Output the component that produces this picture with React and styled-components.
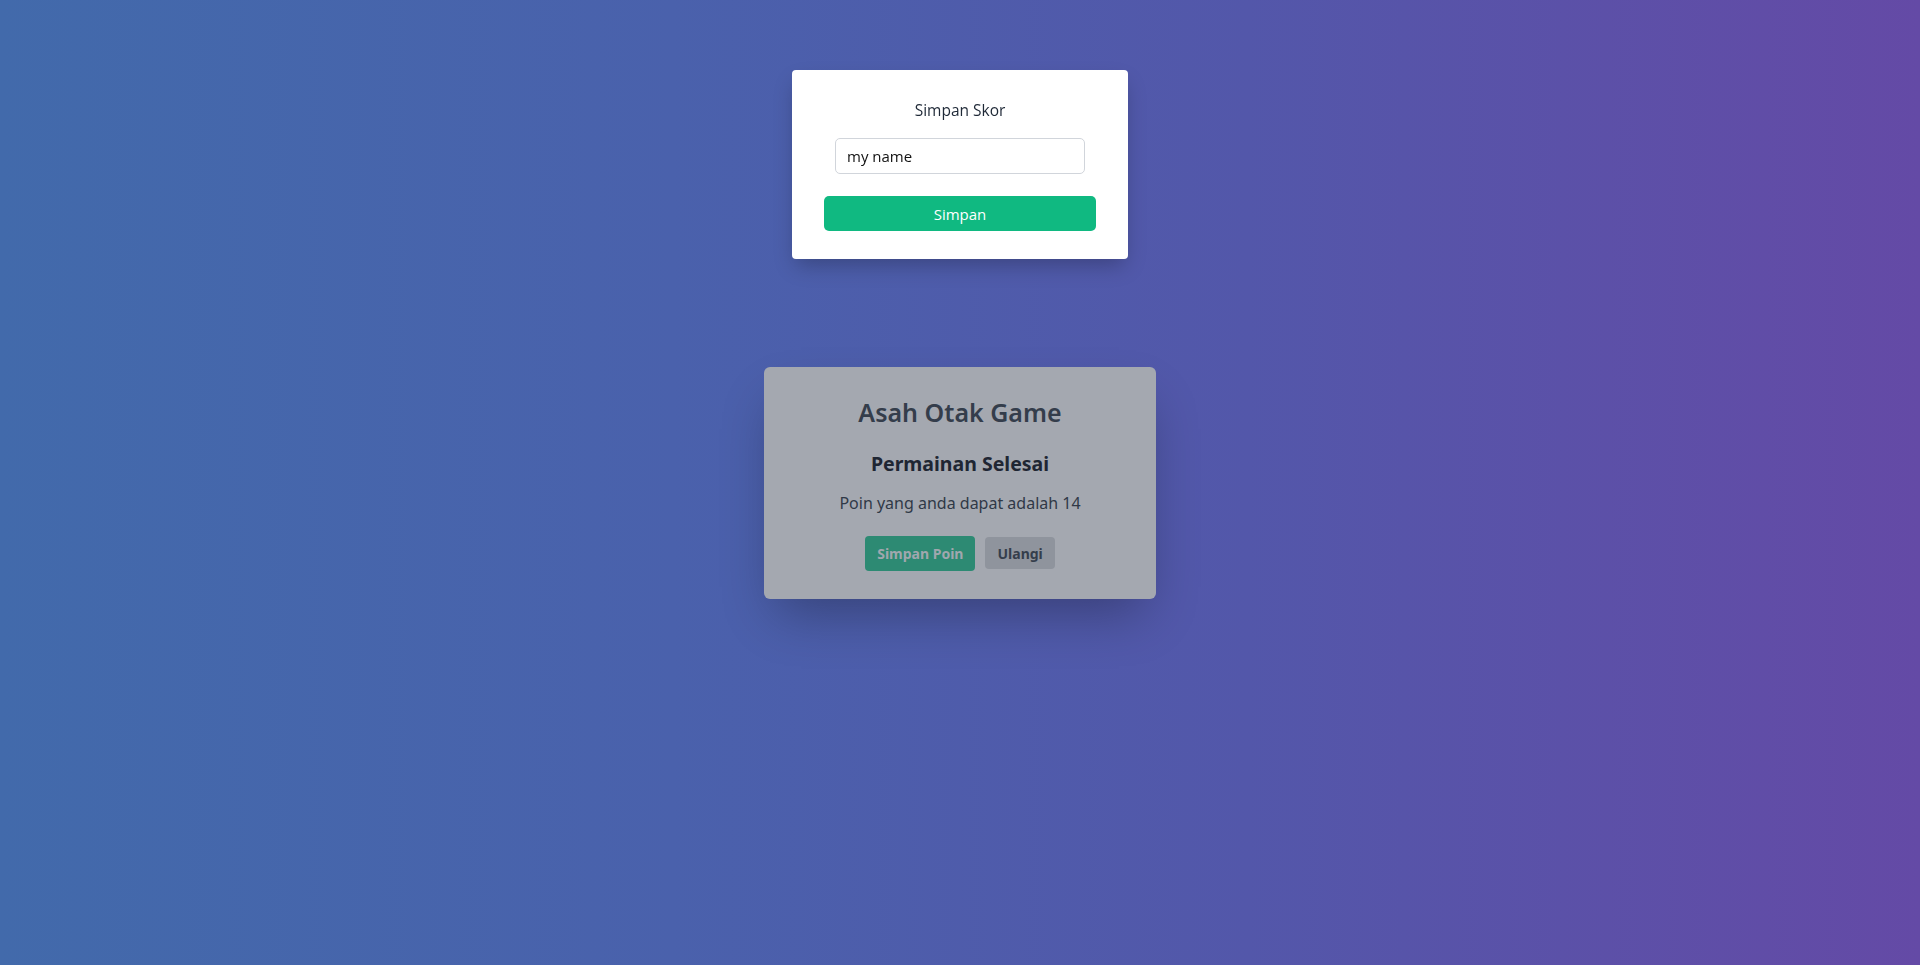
import React, { useState } from 'react';
import styled, { createGlobalStyle } from 'styled-components';

//------------------ Styles ----------------------

const GlobalStyle = createGlobalStyle`
  html, body {
    margin: 0;
    padding: 0;
  }
  body {
    font-family: 'Noto Sans', 'Open Sans', sans-serif;
  }
  * {
    box-sizing: border-box;
  }
`;

const Page = styled.main`
  min-height: 100vh;
  display: flex;
  align-items: center;
  justify-content: center;
  background: linear-gradient(to right, #426aab 0%, #4a61ac 35%, #5357aa 65%, #644aa6 100%);
`;

const GameCard = styled.section`
  width: 392px;
  padding: 28px 24px 28px;
  border-radius: 6px;
  background-color: #a4a8b0;
  text-align: center;
  box-shadow: 0 25px 50px -12px rgba(0, 0, 0, 0.3);
`;

const Title = styled.h1`
  margin: 0;
  font-size: 25px;
  line-height: 34px;
  font-weight: 600;
  color: #343d4b;
`;

const Subtitle = styled.h2`
  margin: 21px 0 0;
  font-size: 19.5px;
  line-height: 28px;
  font-weight: 700;
  color: #1f2633;
`;

const Points = styled.p`
  margin: 13px 0 0;
  font-size: 16px;
  line-height: 24px;
  color: #303947;
`;

const Actions = styled.div`
  margin-top: 21px;
  display: flex;
  justify-content: center;
  align-items: center;
  gap: 10px;
`;

const ActionButton = styled.button`
  border: none;
  border-radius: 4px;
  font-family: inherit;
  font-size: 14px;
  font-weight: 700;
  cursor: pointer;
  padding: 0 ${props => (props.primary ? '12px' : '12px')};
  height: ${props => (props.primary ? '35px' : '32px')};
  background-color: ${props => (props.primary ? '#2d8a73' : '#8f949d')};
  color: ${props => (props.primary ? '#a0a7ae' : '#353e4c')};
`;

const Modal = styled.div`
  position: fixed;
  top: 70px;
  left: 50%;
  transform: translateX(-50%);
  width: 336px;
  padding: 29px 32px 28px;
  border-radius: 4px;
  background-color: #ffffff;
  box-shadow: 0 10px 20px -4px rgba(0, 0, 0, 0.25);
  display: flex;
  flex-direction: column;
  align-items: center;
  font-family: 'Open Sans', 'Noto Sans', sans-serif;
`;

const ModalTitle = styled.h3`
  margin: 0;
  font-size: 15.5px;
  line-height: 22px;
  font-weight: 400;
  color: #1f2937;
`;

const NameInput = styled.input`
  margin-top: 17px;
  width: 250px;
  height: 36px;
  padding: 0 11px;
  border: 1px solid #d1d5db;
  border-radius: 5px;
  font-family: inherit;
  font-size: 15px;
  color: #111111;
  outline: none;
`;

const SaveButton = styled.button`
  margin-top: 22px;
  width: 100%;
  height: 35px;
  border: none;
  border-radius: 5px;
  background-color: #10b981;
  color: #ffffff;
  font-family: inherit;
  font-size: 15px;
  cursor: pointer;
`;

//------------------ Component --------------------

const App = () => {
  const [name, setName] = useState('my name');

  return (
    <>
      <GlobalStyle />
      <Page>
        <GameCard>
          <Title>Asah Otak Game</Title>
          <Subtitle>Permainan Selesai</Subtitle>
          <Points>Poin yang anda dapat adalah 14</Points>
          <Actions>
            <ActionButton primary>Simpan Poin</ActionButton>
            <ActionButton>Ulangi</ActionButton>
          </Actions>
        </GameCard>
      </Page>

      <Modal>
        <ModalTitle>Simpan Skor</ModalTitle>
        <NameInput value={name} onChange={e => setName(e.target.value)} />
        <SaveButton>Simpan</SaveButton>
      </Modal>
    </>
  );
};

export default App;
